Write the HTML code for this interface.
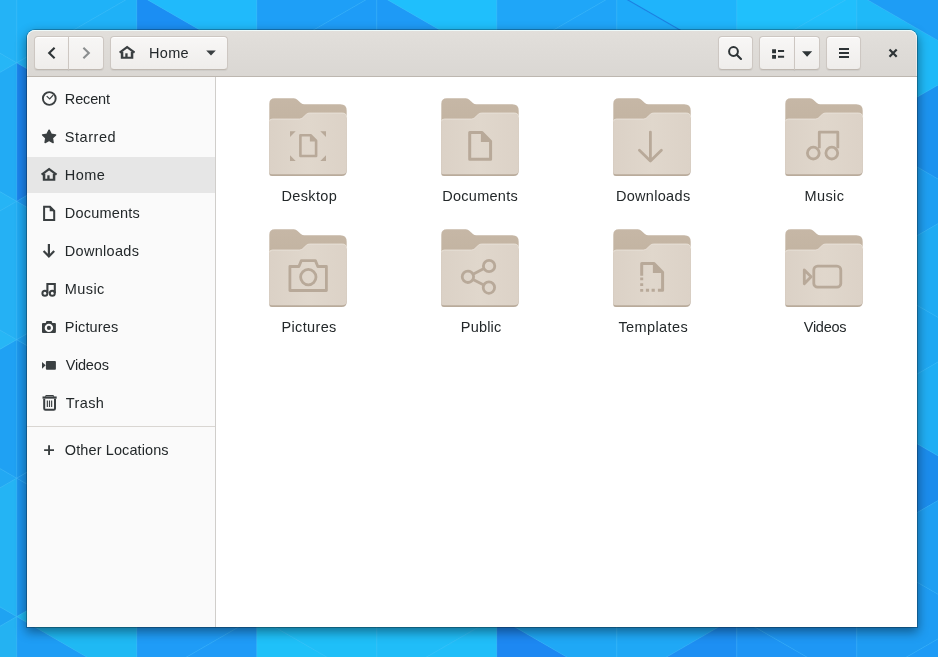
<!DOCTYPE html>
<html><head><meta charset="utf-8"><title>Home</title>
<style>
html,body{margin:0;padding:0;}
*{-webkit-font-smoothing:antialiased;}
body{width:938px;height:657px;overflow:hidden;position:relative;background:#1fa6f5;font-family:"Liberation Sans",sans-serif;}
.wp{position:absolute;left:0;top:0;}
.shadow{position:absolute;left:27px;top:30px;width:890px;height:597px;border-radius:8px 8px 0 0;
  box-shadow:0 4px 11px 1px rgba(0,0,0,0.42),0 0 0 1px rgba(0,0,0,0.24);}
.win{position:absolute;left:27px;top:30px;width:890px;height:597px;border-radius:8px 8px 0 0;overflow:hidden;background:#fff;}
.hb{will-change:transform;position:absolute;left:0;top:0;width:890px;height:47px;background:linear-gradient(#e2dfdb,#dad7d3);border-bottom:1px solid #bdb7b0;box-sizing:border-box;box-shadow:inset 0 1px rgba(240,255,255,0.85), inset 1px 0 rgba(255,255,255,0.45), inset -1px 0 rgba(255,255,255,0.45);border-radius:8px 8px 0 0;}
.btn{position:absolute;top:6px;height:34px;box-sizing:border-box;border:1px solid #cdc7c2;border-bottom-color:#bfb8b1;background:linear-gradient(#f8f7f6,#efedeb);border-radius:4px;box-shadow:0 1px 1px rgba(0,0,0,0.06), inset 0 1px #fff;}
.btn svg{position:absolute;}
.sb{will-change:transform;position:absolute;left:0;top:47px;width:188px;height:550px;background:#fafafa;border-right:1px solid #d0cecb;}
.row{position:absolute;left:0;width:188px;height:36px;}
.row.sel{background:#e6e6e6;}
.row svg{position:absolute;left:14px;top:10px;overflow:visible;}
.row span{position:absolute;left:39px;top:0;height:36px;line-height:36px;font-size:14.5px;color:#23282a;white-space:nowrap;}
.sep{position:absolute;left:0;top:396px;width:188px;height:1px;background:#d9d6d2;}
.main{will-change:transform;position:absolute;left:189px;top:47px;width:701px;height:550px;background:#fff;}
.fi{position:absolute;width:80px;height:82px;}
.fl{position:absolute;text-align:left;font-size:14.5px;line-height:20px;color:#23282a;white-space:nowrap;}
.pb{font-size:14.5px;color:#23282a;}
</style></head><body>
<svg class="wp" width="938" height="657" viewBox="0 0 938 657">
<rect width="938" height="657" fill="#1fa6f5"/>
<polygon points="-103.2,-6.4 -103.2,132.1 16.8,62.8" fill="#26b6f6" stroke="rgba(130,220,255,0.20)" stroke-width="0.8"/>
<polygon points="-103.2,132.1 -103.2,270.5 16.8,201.3" fill="#26b4f5" stroke="rgba(130,220,255,0.20)" stroke-width="0.8"/>
<polygon points="-103.2,270.5 -103.2,408.9 16.8,339.7" fill="#27b6f5" stroke="rgba(130,220,255,0.20)" stroke-width="0.8"/>
<polygon points="-103.2,408.9 -103.2,547.4 16.8,478.2" fill="#22a8f3" stroke="rgba(130,220,255,0.20)" stroke-width="0.8"/>
<polygon points="-103.2,547.4 -103.2,685.8 16.8,616.6" fill="#1fa3f2" stroke="rgba(130,220,255,0.20)" stroke-width="0.8"/>
<polygon points="16.8,-75.6 16.8,62.8 -103.2,-6.4" fill="#24b3f6" stroke="rgba(130,220,255,0.20)" stroke-width="0.8"/>
<polygon points="16.8,62.8 16.8,201.3 -103.2,132.0" fill="#22abf4" stroke="rgba(130,220,255,0.20)" stroke-width="0.8"/>
<polygon points="16.8,201.3 16.8,339.7 -103.2,270.5" fill="#25b1f4" stroke="rgba(130,220,255,0.20)" stroke-width="0.8"/>
<polygon points="16.8,339.7 16.8,478.2 -103.2,408.9" fill="#1fa1f3" stroke="rgba(130,220,255,0.20)" stroke-width="0.8"/>
<polygon points="16.8,478.2 16.8,616.6 -103.2,547.4" fill="#24b4f4" stroke="rgba(130,220,255,0.20)" stroke-width="0.8"/>
<polygon points="16.8,616.6 16.8,755.0 -103.2,685.8" fill="#24b2f2" stroke="rgba(130,220,255,0.20)" stroke-width="0.8"/>
<polygon points="16.8,-75.6 16.8,62.8 136.8,-6.4" fill="#1fb2f8" stroke="rgba(130,220,255,0.20)" stroke-width="0.8"/>
<polygon points="16.8,62.8 16.8,201.3 136.8,132.0" fill="#1b84ee" stroke="rgba(130,220,255,0.20)" stroke-width="0.8"/>
<polygon points="16.8,201.3 16.8,339.7 136.8,270.5" fill="#1fa9f3" stroke="rgba(130,220,255,0.20)" stroke-width="0.8"/>
<polygon points="16.8,339.7 16.8,478.2 136.8,408.9" fill="#1c98ee" stroke="rgba(130,220,255,0.20)" stroke-width="0.8"/>
<polygon points="16.8,478.2 16.8,616.6 136.8,547.4" fill="#1c95ee" stroke="rgba(130,220,255,0.20)" stroke-width="0.8"/>
<polygon points="16.8,616.6 16.8,755.0 136.8,685.8" fill="#1e9df5" stroke="rgba(130,220,255,0.20)" stroke-width="0.8"/>
<polygon points="136.8,-6.4 136.8,132.1 16.8,62.8" fill="#1fb1f7" stroke="rgba(130,220,255,0.20)" stroke-width="0.8"/>
<polygon points="136.8,132.1 136.8,270.5 16.8,201.3" fill="#1d96f0" stroke="rgba(130,220,255,0.20)" stroke-width="0.8"/>
<polygon points="136.8,270.5 136.8,408.9 16.8,339.7" fill="#1ea0f0" stroke="rgba(130,220,255,0.20)" stroke-width="0.8"/>
<polygon points="136.8,408.9 136.8,547.4 16.8,478.2" fill="#1d97ee" stroke="rgba(130,220,255,0.20)" stroke-width="0.8"/>
<polygon points="136.8,547.4 136.8,685.8 16.8,616.6" fill="#1fb9f4" stroke="rgba(130,220,255,0.20)" stroke-width="0.8"/>
<polygon points="136.8,-6.4 136.8,132.1 256.8,62.8" fill="#1b8ef3" stroke="rgba(130,220,255,0.20)" stroke-width="0.8"/>
<polygon points="136.8,547.4 136.8,685.8 256.8,616.6" fill="#1f9cf7" stroke="rgba(130,220,255,0.20)" stroke-width="0.8"/>
<polygon points="256.8,-75.6 256.8,62.8 136.8,-6.4" fill="#20bafb" stroke="rgba(130,220,255,0.20)" stroke-width="0.8"/>
<polygon points="256.8,616.6 256.8,755.0 136.8,685.8" fill="#1f9bf7" stroke="rgba(130,220,255,0.20)" stroke-width="0.8"/>
<polygon points="256.8,-75.6 256.8,62.8 376.8,-6.4" fill="#1e9ff7" stroke="rgba(130,220,255,0.20)" stroke-width="0.8"/>
<polygon points="256.8,616.6 256.8,755.0 376.8,685.8" fill="#1fc1f9" stroke="rgba(130,220,255,0.20)" stroke-width="0.8"/>
<polygon points="376.8,-6.4 376.8,132.1 256.8,62.8" fill="#1e9cf7" stroke="rgba(130,220,255,0.20)" stroke-width="0.8"/>
<polygon points="376.8,547.4 376.8,685.8 256.8,616.6" fill="#1fbff8" stroke="rgba(130,220,255,0.20)" stroke-width="0.8"/>
<polygon points="376.8,-6.4 376.8,132.1 496.8,62.8" fill="#1e9af6" stroke="rgba(130,220,255,0.20)" stroke-width="0.8"/>
<polygon points="376.8,547.4 376.8,685.8 496.8,616.6" fill="#20bdf8" stroke="rgba(130,220,255,0.20)" stroke-width="0.8"/>
<polygon points="496.8,-75.6 496.8,62.8 376.8,-6.4" fill="#1fbffc" stroke="rgba(130,220,255,0.20)" stroke-width="0.8"/>
<polygon points="496.8,616.6 496.8,755.0 376.8,685.8" fill="#20bef9" stroke="rgba(130,220,255,0.20)" stroke-width="0.8"/>
<polygon points="496.8,-75.6 496.8,62.8 616.8,-6.4" fill="#1fa6f8" stroke="rgba(130,220,255,0.20)" stroke-width="0.8"/>
<polygon points="496.8,616.6 496.8,755.0 616.8,685.8" fill="#1d88f2" stroke="rgba(130,220,255,0.20)" stroke-width="0.8"/>
<polygon points="616.8,-6.4 616.8,132.1 496.8,62.8" fill="#1fa4f8" stroke="rgba(130,220,255,0.20)" stroke-width="0.8"/>
<polygon points="616.8,547.4 616.8,685.8 496.8,616.6" fill="#1fa8f6" stroke="rgba(130,220,255,0.20)" stroke-width="0.8"/>
<polygon points="616.8,-6.4 616.8,132.1 736.8,62.8" fill="#1eaaf9" stroke="rgba(130,220,255,0.20)" stroke-width="0.8"/>
<polygon points="616.8,547.4 616.8,685.8 736.8,616.6" fill="#1fa8f6" stroke="rgba(130,220,255,0.20)" stroke-width="0.8"/>
<polygon points="736.8,-75.6 736.8,62.8 616.8,-6.4" fill="#1fb4fb" stroke="rgba(130,220,255,0.20)" stroke-width="0.8"/>
<polygon points="736.8,616.6 736.8,755.0 616.8,685.8" fill="#1d8ff3" stroke="rgba(130,220,255,0.20)" stroke-width="0.8"/>
<polygon points="736.8,-75.6 736.8,62.8 856.8,-6.4" fill="#20c0fc" stroke="rgba(130,220,255,0.20)" stroke-width="0.8"/>
<polygon points="736.8,616.6 736.8,755.0 856.8,685.8" fill="#1e95f5" stroke="rgba(130,220,255,0.20)" stroke-width="0.8"/>
<polygon points="856.8,-6.4 856.8,132.1 736.8,62.8" fill="#20bffc" stroke="rgba(130,220,255,0.20)" stroke-width="0.8"/>
<polygon points="856.8,547.4 856.8,685.8 736.8,616.6" fill="#1e97f5" stroke="rgba(130,220,255,0.20)" stroke-width="0.8"/>
<polygon points="856.8,-6.4 856.8,132.1 976.8,62.8" fill="#1fb9f8" stroke="rgba(130,220,255,0.20)" stroke-width="0.8"/>
<polygon points="856.8,132.1 856.8,270.5 976.8,201.3" fill="#1e9ff2" stroke="rgba(130,220,255,0.20)" stroke-width="0.8"/>
<polygon points="856.8,270.5 856.8,408.9 976.8,339.7" fill="#1fa8f2" stroke="rgba(130,220,255,0.20)" stroke-width="0.8"/>
<polygon points="856.8,408.9 856.8,547.4 976.8,478.2" fill="#1b8cec" stroke="rgba(130,220,255,0.20)" stroke-width="0.8"/>
<polygon points="856.8,547.4 856.8,685.8 976.8,616.6" fill="#1e9cf3" stroke="rgba(130,220,255,0.20)" stroke-width="0.8"/>
<polygon points="976.8,-75.6 976.8,62.8 856.8,-6.4" fill="#1e9df5" stroke="rgba(130,220,255,0.20)" stroke-width="0.8"/>
<polygon points="976.8,62.8 976.8,201.3 856.8,132.0" fill="#1c93ef" stroke="rgba(130,220,255,0.20)" stroke-width="0.8"/>
<polygon points="976.8,201.3 976.8,339.7 856.8,270.5" fill="#20abf3" stroke="rgba(130,220,255,0.20)" stroke-width="0.8"/>
<polygon points="976.8,339.7 976.8,478.2 856.8,408.9" fill="#20aef4" stroke="rgba(130,220,255,0.20)" stroke-width="0.8"/>
<polygon points="976.8,478.2 976.8,616.6 856.8,547.4" fill="#1f9ff2" stroke="rgba(130,220,255,0.20)" stroke-width="0.8"/>
<polygon points="976.8,616.6 976.8,755.0 856.8,685.8" fill="#1e9bf6" stroke="rgba(130,220,255,0.20)" stroke-width="0.8"/>
<line x1="616.8" y1="-6.4" x2="736.8" y2="62.8" stroke="#1573dc" stroke-width="1.1" opacity="0.8"/>
</svg>
<div class="shadow"></div><div class="win">
<div class="hb">
<div class="btn" style="left:7px;width:35px;border-radius:4px 0 0 4px;"><svg width="16" height="16" viewBox="0 0 16 16" style="left:9px;top:8px"><path d="M10.6 2.8 L5.2 8 L10.6 13.2" fill="none" stroke="#2e3436" stroke-width="2.1"/></svg></div>
<div class="btn" style="left:41px;width:36px;border-radius:0 4px 4px 0;background:linear-gradient(#f7f6f5,#f1efed);"><svg width="16" height="16" viewBox="0 0 16 16" style="left:9px;top:8px"><path d="M5.400 2.8 L10.8 8 L5.4 13.2" fill="none" stroke="#8b8e8f" stroke-width="2.1"/></svg></div>
<div class="btn" style="left:83px;width:118px;"><svg width="16" height="16" viewBox="0 0 16 16" style="left:8px;top:8px"><path d="M0.6 7.6 L8.1 2.1 L15.6 7.6" fill="none" stroke="#3a3f41" stroke-width="2.1"/><path d="M1.8 6.8 H4.3 V11.8 H11.8 V6.8 H14.3 V13.7 H1.8 Z" fill="#3a3f41"/><rect x="6.3" y="8.3" width="2.3" height="4" fill="#3a3f41"/></svg><span class="pb" style="position:absolute;left:38.10px;top:-0.5px;line-height:32px;letter-spacing:0.300px">Home</span><svg width="12" height="8" viewBox="0 0 12 8" style="left:94px;top:13px"><path d="M1.2 0.6 H10.800 L6 5.6 Z" fill="#3a3f41"/></svg></div>
<div class="btn" style="left:691px;width:35px;"><svg width="16" height="16" viewBox="0 0 16 16" style="left:8px;top:8px"><circle cx="6.500" cy="6.500" r="4.4" fill="none" stroke="#2e3436" stroke-width="2"/><path d="M9.700 9.700 L14 14" stroke="#2e3436" stroke-width="2.100" stroke-linecap="round"/></svg></div>
<div class="btn" style="left:732px;width:36px;border-radius:4px 0 0 4px;"><svg width="16" height="16" viewBox="0 0 16 16" style="left:9px;top:8px"><path d="M3.100 4.300 H7 V8.200 H3.100 Z M3.100 9.900 H7 V13.800 H3.100 Z" fill="#2e3436"/><path d="M9 6 H15.100 M9 11.800 H15.100" stroke="#2e3436" stroke-width="1.900"/></svg></div>
<div class="btn" style="left:767px;width:26px;border-radius:0 4px 4px 0;"><svg width="12" height="8" viewBox="0 0 12 8" style="left:6px;top:13px"><path d="M1 1.300 H11.200 L6.100 6.700 Z" fill="#2e3436"/></svg></div>
<div class="btn" style="left:799px;width:35px;"><svg width="16" height="16" viewBox="0 0 16 16" style="left:9px;top:8px"><path d="M3 4 H13 M3 8 H13 M3 12 H13" stroke="#2e3436" stroke-width="2"/></svg></div>
<svg width="16" height="16" viewBox="0 0 16 16" style="position:absolute;left:858px;top:15px"><path d="M4.500 4.500 L11.700 11.700 M11.700 4.500 L4.500 11.700" stroke="#2e3436" stroke-width="2.200"/></svg>
</div>
<div class="sb">
<div class="row" style="top:4px"><svg width="16" height="16" viewBox="0 0 16 16"><circle cx="8.3" cy="7.5" r="6.4" fill="none" stroke="#3a3f41" stroke-width="1.9"/><path d="M5.7 5.1 L8.7 7.9 L12.1 4.2" fill="none" stroke="#3a3f41" stroke-width="1.25"/></svg><span style="left:37.82px;letter-spacing:-0.144px">Recent</span></div>
<div class="row" style="top:42px"><svg width="16" height="16" viewBox="0 0 16 16"><path d="M8.10 1.20 L10.13 5.21 L14.57 5.90 L11.38 9.07 L12.10 13.50 L8.10 11.45 L4.10 13.50 L4.82 9.07 L1.63 5.90 L6.07 5.21 Z" fill="#3a3f41" stroke="#3a3f41" stroke-width="1.5" stroke-linejoin="round"/></svg><span style="left:37.82px;letter-spacing:0.540px">Starred</span></div>
<div class="row sel" style="top:80px"><svg width="16" height="16" viewBox="0 0 16 16"><path d="M0.6 7.6 L8.1 2.1 L15.6 7.6" fill="none" stroke="#3a3f41" stroke-width="2.1"/><path d="M1.8 6.8 H4.3 V11.8 H11.8 V6.8 H14.3 V13.7 H1.8 Z" fill="#3a3f41"/><rect x="6.3" y="8.3" width="2.3" height="4" fill="#3a3f41"/></svg><span style="left:37.82px;letter-spacing:0.480px">Home</span></div>
<div class="row" style="top:118px"><svg width="16" height="16" viewBox="0 0 16 16"><path d="M3.1 1.8 H9 L13.2 6 V14.9 H3.1 Z" fill="none" stroke="#3a3f41" stroke-width="2" stroke-linejoin="miter"/><path d="M8.7 1.4 V6.3 H13.6 Z" fill="#3a3f41"/></svg><span style="left:37.82px;letter-spacing:0.205px">Documents</span></div>
<div class="row" style="top:156px"><svg width="16" height="16" viewBox="0 0 16 16"><path d="M7.9 0.9 V13 M2.6 8 L7.9 13.400 L13.2 8" fill="none" stroke="#3a3f41" stroke-width="2.2"/></svg><span style="left:37.82px;letter-spacing:0.295px">Downloads</span></div>
<div class="row" style="top:194px"><svg width="16" height="16" viewBox="0 0 16 16"><path d="M6.4 12 V3 H13.8 V12" fill="none" stroke="#3a3f41" stroke-width="2.1"/><circle cx="3.9" cy="12.3" r="2.5" fill="none" stroke="#3a3f41" stroke-width="2"/><circle cx="11.3" cy="12.3" r="2.5" fill="none" stroke="#3a3f41" stroke-width="2"/></svg><span style="left:37.82px;letter-spacing:0.405px">Music</span></div>
<div class="row" style="top:232px"><svg width="16" height="16" viewBox="0 0 16 16"><path d="M5.6 2.1 Q5.3 2.1 5.2 2.4 L4.7 4 H2 Q1 4 1 5 V13 Q1 14 2 14 H13.9 Q14.9 14 14.9 13 V5 Q14.9 4 13.9 4 H11.3 L10.8 2.4 Q10.7 2.1 10.4 2.1 Z M7.9 4.7 A4.2 4.2 0 1 0 7.9 13.1 A4.2 4.2 0 1 0 7.9 4.7 Z" fill="#3a3f41" fill-rule="evenodd"/><circle cx="7.9" cy="8.9" r="2.05" fill="#3a3f41"/></svg><span style="left:37.82px;letter-spacing:0.155px">Pictures</span></div>
<div class="row" style="top:270px"><svg width="16" height="16" viewBox="0 0 16 16"><path d="M1 4.9 L4.7 8.35 L1 11.8 Z" fill="#3a3f41"/><rect x="4.9" y="4" width="10" height="8.7" rx="0.9" fill="#3a3f41"/></svg><span style="left:38.72px;letter-spacing:-0.180px">Videos</span></div>
<div class="row" style="top:308px"><svg width="16" height="16" viewBox="0 0 16 16"><path d="M3.2 3.7 V13.5 Q3.2 14.8 4.5 14.8 H12.7 Q14 14.8 14 13.5 V3.7" fill="none" stroke="#3a3f41" stroke-width="2"/><path d="M1.5 2.55 H15.7" stroke="#3a3f41" stroke-width="2.2"/><path d="M4.3 1.6 L5.2 0.6 H12 L12.900 1.6" fill="none" stroke="#3a3f41" stroke-width="1.1"/><path d="M6.35 5.6 V12 M8.500 5.6 V12 M10.65 5.6 V12" stroke="#3a3f41" stroke-width="1.15"/></svg><span style="left:38.72px;letter-spacing:0.399px">Trash</span></div>
<div class="row" style="top:355px"><svg width="16" height="16" viewBox="0 0 16 16"><path d="M8.05 3.2 V13 M3.1 8.1 H13" stroke="#3a3f41" stroke-width="1.9"/></svg><span style="left:37.82px;letter-spacing:0.101px">Other Locations</span></div>
<div class="sep" style="top:349px"></div>
</div>
<div class="main">
<div class="fi" style="left:52px;top:20px"><svg width="80" height="82" viewBox="-1.30 -1.30 80 82">
<defs><linearGradient id="fgDesktop" x1="0" y1="0" x2="1" y2="0"><stop offset="0" stop-color="#dbd1c6"/><stop offset="0.5" stop-color="#e0d7cc"/><stop offset="1" stop-color="#dcd2c7"/></linearGradient>
<linearGradient id="bgDesktop" x1="0" y1="0" x2="0" y2="1"><stop offset="0" stop-color="#c6b7a6"/><stop offset="0.3" stop-color="#c3b4a2"/><stop offset="1" stop-color="#b9ab9b"/></linearGradient></defs>
<path d="M5.5 0 H24.6 Q26.8 0 28.3 1.6 L31.6 4.7 Q33 6 35 6 H71 Q77.4 6 77.4 12.4 V72.6 Q77.4 77.6 72.4 77.6 H2.5 Q0 77.6 0 75.1 V5.5 Q0 0 5.5 0 Z" fill="url(#bgDesktop)"/>
<path d="M0 23.9 Q0 20.7 3.2 20.7 H30 Q32 20.7 33.4 19.4 L37 16 Q38.4 14.7 40.4 14.7 H72.9 Q77.4 14.7 77.4 19.2 V71.4 Q77.4 75.9 72.9 75.9 H2.5 Q0 75.9 0 73.4 Z" fill="url(#fgDesktop)"/>
<path d="M0.2 23 Q0.4 20.7 3.2 20.7 H30 Q32 20.7 33.4 19.4 L37 16 Q38.4 14.7 40.4 14.7 H72.9 Q77.4 14.7 77.4 19.2" fill="none" stroke="#ece6de" stroke-width="0.9" opacity="0.85"/>
<path d="M31.1 36.9 H41.3 L46.8 42.4 V57.7 H31.1 Z" fill="none" stroke="#b8a999" stroke-width="2.6" stroke-linejoin="round"/><path d="M40.6 36.4 V43.1 H47.3 Z" fill="#b8a999"/><path d="M20.7 32.9 H26.4 L20.7 38.6 Z M56.7 32.9 V38.6 L51 32.9 Z M20.7 62.7 V57 L26.4 62.7 Z M56.7 62.7 H51 L56.7 57 Z" fill="#b8a999"/>
</svg></div>
<div class="fl" style="left:65.42px;top:109px;letter-spacing:0.360px">Desktop</div>
<div class="fi" style="left:224px;top:20px"><svg width="80" height="82" viewBox="-1.30 -1.30 80 82">
<defs><linearGradient id="fgDocuments" x1="0" y1="0" x2="1" y2="0"><stop offset="0" stop-color="#dbd1c6"/><stop offset="0.5" stop-color="#e0d7cc"/><stop offset="1" stop-color="#dcd2c7"/></linearGradient>
<linearGradient id="bgDocuments" x1="0" y1="0" x2="0" y2="1"><stop offset="0" stop-color="#c6b7a6"/><stop offset="0.3" stop-color="#c3b4a2"/><stop offset="1" stop-color="#b9ab9b"/></linearGradient></defs>
<path d="M5.5 0 H24.6 Q26.8 0 28.3 1.6 L31.6 4.7 Q33 6 35 6 H71 Q77.4 6 77.4 12.4 V72.6 Q77.4 77.6 72.4 77.6 H2.5 Q0 77.6 0 75.1 V5.5 Q0 0 5.5 0 Z" fill="url(#bgDocuments)"/>
<path d="M0 23.9 Q0 20.7 3.2 20.7 H30 Q32 20.7 33.4 19.4 L37 16 Q38.4 14.7 40.4 14.7 H72.9 Q77.4 14.7 77.4 19.2 V71.4 Q77.4 75.9 72.9 75.9 H2.5 Q0 75.9 0 73.4 Z" fill="url(#fgDocuments)"/>
<path d="M0.2 23 Q0.4 20.7 3.2 20.7 H30 Q32 20.7 33.4 19.4 L37 16 Q38.4 14.7 40.4 14.7 H72.9 Q77.4 14.7 77.4 19.2" fill="none" stroke="#ece6de" stroke-width="0.9" opacity="0.85"/>
<path d="M28.4 34.1 H40.5 L49.3 42.9 V61 H28.4 Z" fill="none" stroke="#b8a999" stroke-width="3" stroke-linejoin="round"/><path d="M39.6 33.4 V43.8 H50 Z" fill="#b8a999"/>
</svg></div>
<div class="fl" style="left:226.26px;top:109px;letter-spacing:0.265px">Documents</div>
<div class="fi" style="left:396px;top:20px"><svg width="80" height="82" viewBox="-1.30 -1.30 80 82">
<defs><linearGradient id="fgDownloads" x1="0" y1="0" x2="1" y2="0"><stop offset="0" stop-color="#dbd1c6"/><stop offset="0.5" stop-color="#e0d7cc"/><stop offset="1" stop-color="#dcd2c7"/></linearGradient>
<linearGradient id="bgDownloads" x1="0" y1="0" x2="0" y2="1"><stop offset="0" stop-color="#c6b7a6"/><stop offset="0.3" stop-color="#c3b4a2"/><stop offset="1" stop-color="#b9ab9b"/></linearGradient></defs>
<path d="M5.5 0 H24.6 Q26.8 0 28.3 1.6 L31.6 4.7 Q33 6 35 6 H71 Q77.4 6 77.4 12.4 V72.6 Q77.4 77.6 72.4 77.6 H2.5 Q0 77.6 0 75.1 V5.5 Q0 0 5.5 0 Z" fill="url(#bgDownloads)"/>
<path d="M0 23.9 Q0 20.7 3.2 20.7 H30 Q32 20.7 33.4 19.4 L37 16 Q38.4 14.7 40.4 14.7 H72.9 Q77.4 14.7 77.4 19.2 V71.4 Q77.4 75.9 72.9 75.9 H2.5 Q0 75.9 0 73.4 Z" fill="url(#fgDownloads)"/>
<path d="M0.2 23 Q0.4 20.7 3.2 20.7 H30 Q32 20.7 33.4 19.4 L37 16 Q38.4 14.7 40.4 14.7 H72.9 Q77.4 14.7 77.4 19.2" fill="none" stroke="#ece6de" stroke-width="0.9" opacity="0.85"/>
<path d="M37.1 33.8 V62 M26.1 52 L37.1 62.7 L48.1 52" fill="none" stroke="#b8a999" stroke-width="2.8" stroke-linecap="round" stroke-linejoin="round"/>
</svg></div>
<div class="fl" style="left:399.88px;top:109px;letter-spacing:0.315px">Downloads</div>
<div class="fi" style="left:568px;top:20px"><svg width="80" height="82" viewBox="-1.30 -1.30 80 82">
<defs><linearGradient id="fgMusic" x1="0" y1="0" x2="1" y2="0"><stop offset="0" stop-color="#dbd1c6"/><stop offset="0.5" stop-color="#e0d7cc"/><stop offset="1" stop-color="#dcd2c7"/></linearGradient>
<linearGradient id="bgMusic" x1="0" y1="0" x2="0" y2="1"><stop offset="0" stop-color="#c6b7a6"/><stop offset="0.3" stop-color="#c3b4a2"/><stop offset="1" stop-color="#b9ab9b"/></linearGradient></defs>
<path d="M5.5 0 H24.6 Q26.8 0 28.3 1.6 L31.6 4.7 Q33 6 35 6 H71 Q77.4 6 77.4 12.4 V72.6 Q77.4 77.6 72.4 77.6 H2.5 Q0 77.6 0 75.1 V5.5 Q0 0 5.5 0 Z" fill="url(#bgMusic)"/>
<path d="M0 23.9 Q0 20.7 3.2 20.7 H30 Q32 20.7 33.4 19.4 L37 16 Q38.4 14.7 40.4 14.7 H72.9 Q77.4 14.7 77.4 19.2 V71.4 Q77.4 75.9 72.9 75.9 H2.5 Q0 75.9 0 73.4 Z" fill="url(#fgMusic)"/>
<path d="M0.2 23 Q0.4 20.7 3.2 20.7 H30 Q32 20.7 33.4 19.4 L37 16 Q38.4 14.7 40.4 14.7 H72.9 Q77.4 14.7 77.4 19.2" fill="none" stroke="#ece6de" stroke-width="0.9" opacity="0.85"/>
<g fill="none" stroke="#b8a999" stroke-width="2.8"><path d="M34 50 V33.9 H52.5 V50" stroke-linejoin="round"/><circle cx="28" cy="54.8" r="5.9"/><circle cx="46.5" cy="54.8" r="5.9"/></g>
</svg></div>
<div class="fl" style="left:588.44px;top:109px;letter-spacing:0.405px">Music</div>
<div class="fi" style="left:52px;top:151px"><svg width="80" height="82" viewBox="-1.30 -1.30 80 82">
<defs><linearGradient id="fgPictures" x1="0" y1="0" x2="1" y2="0"><stop offset="0" stop-color="#dbd1c6"/><stop offset="0.5" stop-color="#e0d7cc"/><stop offset="1" stop-color="#dcd2c7"/></linearGradient>
<linearGradient id="bgPictures" x1="0" y1="0" x2="0" y2="1"><stop offset="0" stop-color="#c6b7a6"/><stop offset="0.3" stop-color="#c3b4a2"/><stop offset="1" stop-color="#b9ab9b"/></linearGradient></defs>
<path d="M5.5 0 H24.6 Q26.8 0 28.3 1.6 L31.6 4.7 Q33 6 35 6 H71 Q77.4 6 77.4 12.4 V72.6 Q77.4 77.6 72.4 77.6 H2.5 Q0 77.6 0 75.1 V5.5 Q0 0 5.5 0 Z" fill="url(#bgPictures)"/>
<path d="M0 23.9 Q0 20.7 3.2 20.7 H30 Q32 20.7 33.4 19.4 L37 16 Q38.4 14.7 40.4 14.7 H72.9 Q77.4 14.7 77.4 19.2 V71.4 Q77.4 75.9 72.9 75.9 H2.5 Q0 75.9 0 73.4 Z" fill="url(#fgPictures)"/>
<path d="M0.2 23 Q0.4 20.7 3.2 20.7 H30 Q32 20.7 33.4 19.4 L37 16 Q38.4 14.7 40.4 14.7 H72.9 Q77.4 14.7 77.4 19.2" fill="none" stroke="#ece6de" stroke-width="0.9" opacity="0.85"/>
<g fill="none" stroke="#b8a999" stroke-width="2.8" stroke-linejoin="round"><path d="M20.6 37.2 H29.6 L32 31.3 H46.1 L48.5 37.2 H57.1 V61.2 H20.6 Z"/><circle cx="39" cy="47.8" r="7.7"/></g>
</svg></div>
<div class="fl" style="left:65.42px;top:240px;letter-spacing:0.360px">Pictures</div>
<div class="fi" style="left:224px;top:151px"><svg width="80" height="82" viewBox="-1.30 -1.30 80 82">
<defs><linearGradient id="fgPublic" x1="0" y1="0" x2="1" y2="0"><stop offset="0" stop-color="#dbd1c6"/><stop offset="0.5" stop-color="#e0d7cc"/><stop offset="1" stop-color="#dcd2c7"/></linearGradient>
<linearGradient id="bgPublic" x1="0" y1="0" x2="0" y2="1"><stop offset="0" stop-color="#c6b7a6"/><stop offset="0.3" stop-color="#c3b4a2"/><stop offset="1" stop-color="#b9ab9b"/></linearGradient></defs>
<path d="M5.5 0 H24.6 Q26.8 0 28.3 1.6 L31.6 4.7 Q33 6 35 6 H71 Q77.4 6 77.4 12.4 V72.6 Q77.4 77.6 72.4 77.6 H2.5 Q0 77.6 0 75.1 V5.5 Q0 0 5.5 0 Z" fill="url(#bgPublic)"/>
<path d="M0 23.9 Q0 20.7 3.2 20.7 H30 Q32 20.7 33.4 19.4 L37 16 Q38.4 14.7 40.4 14.7 H72.9 Q77.4 14.7 77.4 19.2 V71.4 Q77.4 75.9 72.9 75.9 H2.5 Q0 75.9 0 73.4 Z" fill="url(#fgPublic)"/>
<path d="M0.2 23 Q0.4 20.7 3.2 20.7 H30 Q32 20.7 33.4 19.4 L37 16 Q38.4 14.7 40.4 14.7 H72.9 Q77.4 14.7 77.4 19.2" fill="none" stroke="#ece6de" stroke-width="0.9" opacity="0.85"/>
<g fill="none" stroke="#b8a999" stroke-width="2.8"><circle cx="26.6" cy="47.5" r="5.7"/><circle cx="47.8" cy="36.7" r="5.7"/><circle cx="47.6" cy="58.3" r="5.7"/><path d="M31.7 44.9 L42.7 39.3 M31.7 50.1 L42.5 55.700"/></g>
</svg></div>
<div class="fl" style="left:244.80px;top:240px;letter-spacing:0.180px">Public</div>
<div class="fi" style="left:396px;top:151px"><svg width="80" height="82" viewBox="-1.30 -1.30 80 82">
<defs><linearGradient id="fgTemplates" x1="0" y1="0" x2="1" y2="0"><stop offset="0" stop-color="#dbd1c6"/><stop offset="0.5" stop-color="#e0d7cc"/><stop offset="1" stop-color="#dcd2c7"/></linearGradient>
<linearGradient id="bgTemplates" x1="0" y1="0" x2="0" y2="1"><stop offset="0" stop-color="#c6b7a6"/><stop offset="0.3" stop-color="#c3b4a2"/><stop offset="1" stop-color="#b9ab9b"/></linearGradient></defs>
<path d="M5.5 0 H24.6 Q26.8 0 28.3 1.6 L31.6 4.7 Q33 6 35 6 H71 Q77.4 6 77.4 12.4 V72.6 Q77.4 77.6 72.4 77.6 H2.5 Q0 77.6 0 75.1 V5.5 Q0 0 5.5 0 Z" fill="url(#bgTemplates)"/>
<path d="M0 23.9 Q0 20.7 3.2 20.7 H30 Q32 20.7 33.4 19.4 L37 16 Q38.4 14.7 40.4 14.7 H72.9 Q77.4 14.7 77.4 19.2 V71.4 Q77.4 75.9 72.9 75.9 H2.5 Q0 75.9 0 73.4 Z" fill="url(#fgTemplates)"/>
<path d="M0.2 23 Q0.4 20.7 3.2 20.7 H30 Q32 20.7 33.4 19.4 L37 16 Q38.4 14.7 40.4 14.7 H72.9 Q77.4 14.7 77.4 19.2" fill="none" stroke="#ece6de" stroke-width="0.9" opacity="0.85"/>
<g fill="none" stroke="#b8a999" stroke-width="3"><path d="M28.4 46.4 V34.1 H40.5 L49.3 42.9 V61 H44.6" stroke-linejoin="round"/><path d="M28.4 48.2 V62.5" stroke-dasharray="2.8 2.95"/><path d="M32.6 61 H44" stroke-dasharray="3.2 2.5"/></g><path d="M39.6 33.4 V43.8 H50 Z" fill="#b8a999"/>
</svg></div>
<div class="fl" style="left:402.40px;top:240px;letter-spacing:0.402px">Templates</div>
<div class="fi" style="left:568px;top:151px"><svg width="80" height="82" viewBox="-1.30 -1.30 80 82">
<defs><linearGradient id="fgVideos" x1="0" y1="0" x2="1" y2="0"><stop offset="0" stop-color="#dbd1c6"/><stop offset="0.5" stop-color="#e0d7cc"/><stop offset="1" stop-color="#dcd2c7"/></linearGradient>
<linearGradient id="bgVideos" x1="0" y1="0" x2="0" y2="1"><stop offset="0" stop-color="#c6b7a6"/><stop offset="0.3" stop-color="#c3b4a2"/><stop offset="1" stop-color="#b9ab9b"/></linearGradient></defs>
<path d="M5.5 0 H24.6 Q26.8 0 28.3 1.6 L31.6 4.7 Q33 6 35 6 H71 Q77.4 6 77.4 12.4 V72.6 Q77.4 77.6 72.4 77.6 H2.5 Q0 77.6 0 75.1 V5.5 Q0 0 5.5 0 Z" fill="url(#bgVideos)"/>
<path d="M0 23.9 Q0 20.7 3.2 20.7 H30 Q32 20.7 33.4 19.4 L37 16 Q38.4 14.7 40.4 14.7 H72.9 Q77.4 14.7 77.4 19.2 V71.4 Q77.4 75.9 72.9 75.9 H2.5 Q0 75.9 0 73.4 Z" fill="url(#fgVideos)"/>
<path d="M0.2 23 Q0.4 20.7 3.2 20.7 H30 Q32 20.7 33.4 19.4 L37 16 Q38.4 14.7 40.4 14.7 H72.9 Q77.4 14.7 77.4 19.2" fill="none" stroke="#ece6de" stroke-width="0.9" opacity="0.85"/>
<g fill="none" stroke="#b8a999" stroke-width="2.8" stroke-linejoin="round"><rect x="28.5" y="36.8" width="27" height="21.1" rx="3.8"/><path d="M19 40.6 L25.8 47.5 L19 54.400 Z"/></g>
</svg></div>
<div class="fl" style="left:587.72px;top:240px;letter-spacing:-0.252px">Videos</div>
</div>
</div></body></html>
